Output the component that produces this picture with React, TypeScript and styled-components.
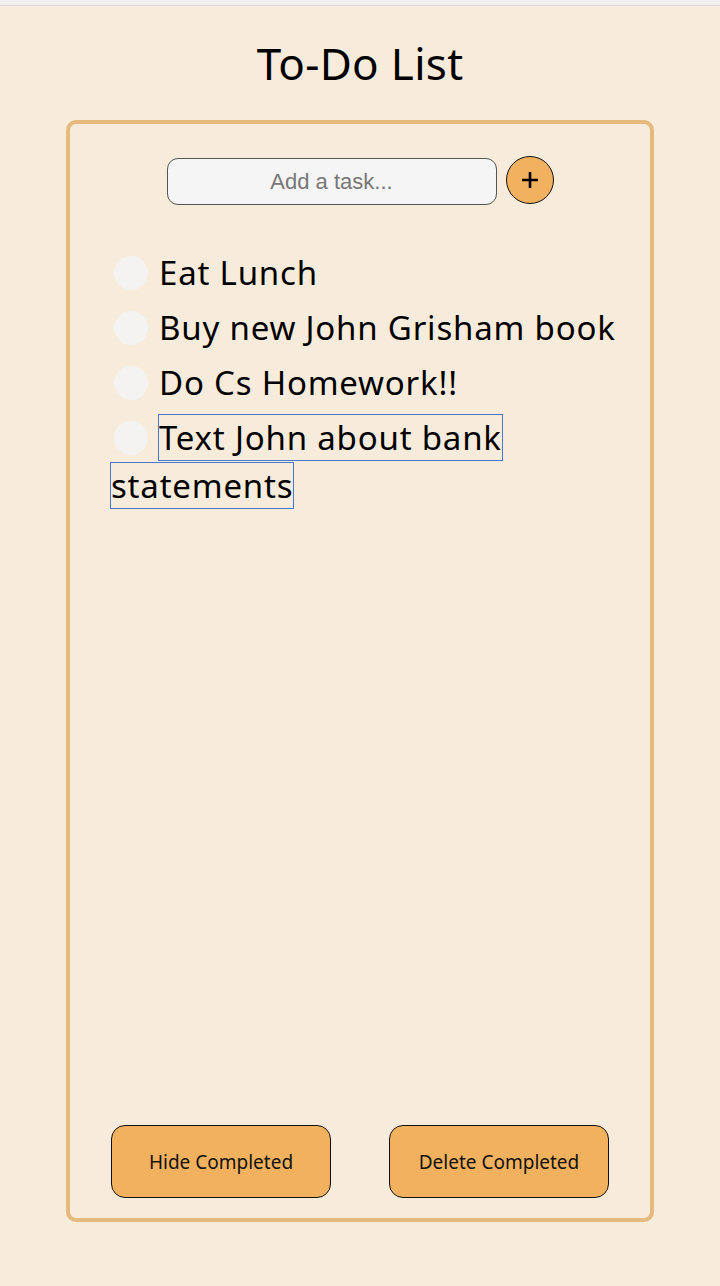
import React from "react";
import styled, { createGlobalStyle } from "styled-components";

const GlobalStyle = createGlobalStyle`
  html, body {
    margin: 0;
    padding: 0;
    background: #f7ebdb;
  }
  * { box-sizing: border-box; }
`;

const FONT = `"Noto Sans", "Lato", sans-serif`;

const Page = styled.div`
  min-height: 1286px;
  display: flex;
  flex-direction: column;
  align-items: center;
  background: #f7ebdb;
  font-family: ${FONT};
  color: #000;
`;

const TopStrip = styled.div`
  align-self: stretch;
  height: 6px;
  background: #f1f1f1;
  border-bottom: 1px solid #d9d9d9;
`;

const Title = styled.h1`
  margin: 32px 0 0;
  height: 82px;
  font-size: 44px;
  font-weight: 400;
  line-height: 50px;
  letter-spacing: 0.3px;
  text-align: center;
`;

const Card = styled.div`
  width: 588px;
  height: 1102px;
  border: 4px solid #e6b97f;
  border-radius: 10px;
  display: flex;
  flex-direction: column;
`;

const InputRow = styled.form`
  margin-top: 34px;
  display: flex;
  justify-content: center;
  align-items: center;
  gap: 9px;
`;

const TaskInput = styled.input`
  width: 330px;
  height: 47px;
  border-radius: 11px;
  border: 1px solid #555;
  background: #f5f5f5;
  font-family: "Liberation Sans", Arial, sans-serif;
  font-size: 22px;
  text-align: center;
  outline: none;
  &::placeholder { color: #777; }
`;

const AddButton = styled.button`
  width: 48px;
  height: 48px;
  border-radius: 50%;
  border: 1.5px solid #111;
  background: #f2b15e;
  display: flex;
  align-items: center;
  justify-content: center;
  padding: 0;
  margin-top: -3px;
`;

const TaskList = styled.ul`
  list-style: none;
  margin: 44px 0 0;
  padding: 0 0 0 41px;
`;

const TaskItem = styled.li`
  font-size: 33px;
  line-height: 48px;
  letter-spacing: 0.8px;
  margin-bottom: 7px;
`;

const Check = styled.span`
  display: inline-block;
  width: 34px;
  height: 34px;
  border-radius: 50%;
  background: #f4f3f1;
  vertical-align: middle;
  margin: -6px 11px 0 3px;
`;

const TaskText = styled.span<{ $editing?: boolean }>`
  outline: ${(p) => (p.$editing ? "1px solid #4a78cf" : "none")};
  outline-offset: 0px;
`;

const Footer = styled.div`
  margin-top: auto;
  margin-bottom: 20px;
  display: flex;
  justify-content: center;
  gap: 58px;
`;

const ActionButton = styled.button`
  width: 220px;
  height: 73px;
  border-radius: 14px;
  border: 1.5px solid #111;
  background: #f2b15e;
  font-family: ${FONT};
  font-size: 19px;
  color: #111;
`;

const tasks = [
  { text: "Eat Lunch" },
  { text: "Buy new John Grisham book" },
  { text: "Do Cs Homework!!" },
  { text: "Text John about bank statements", editing: true },
];

export default function App() {
  return (
    <>
      <GlobalStyle />
      <Page>
        <TopStrip />
        <Title>To-Do List</Title>
        <Card>
          <InputRow onSubmit={(e) => e.preventDefault()}>
            <TaskInput placeholder="Add a task..." />
            <AddButton type="submit" aria-label="Add">
              <svg width="20" height="20" viewBox="0 0 20 20">
                <path d="M10 2v16M2 10h16" stroke="#000" strokeWidth="2.6" />
              </svg>
            </AddButton>
          </InputRow>
          <TaskList>
            {tasks.map((t) => (
              <TaskItem key={t.text}>
                <Check />
                <TaskText $editing={t.editing}>{t.text}</TaskText>
              </TaskItem>
            ))}
          </TaskList>
          <Footer>
            <ActionButton>Hide Completed</ActionButton>
            <ActionButton>Delete Completed</ActionButton>
          </Footer>
        </Card>
      </Page>
    </>
  );
}
